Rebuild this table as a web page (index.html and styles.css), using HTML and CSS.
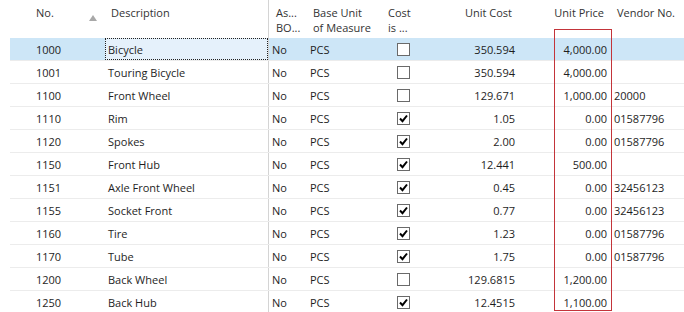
FILE: index.html
```html
<!DOCTYPE html>
<html>
<head>
<meta charset="utf-8">
<link rel="stylesheet" href="styles.css">
</head>
<body>
<div class="grid">
  <div class="row head">
    <div class="c c0 hd">No.<span class="sort"></span></div>
    <div class="c c1 hd">Description</div>
    <div class="c c2 hd">As...<br>BO...</div>
    <div class="c c3 hd">Base Unit<br>of Measure</div>
    <div class="c c4 hd">Cost<br>is ...</div>
    <div class="c c5 hd num">Unit Cost</div>
    <div class="c c6 hd num">Unit Price</div>
    <div class="c c7 hd">Vendor No.</div>
  </div>
  <div class="row sel">
    <div class="c c0">1000</div><div class="c c1 focus">Bicycle</div><div class="c c2">No</div><div class="c c3">PCS</div>
    <div class="c c4"><span class="cb"></span></div><div class="c c5 num">350.594</div><div class="c c6 num">4,000.00</div><div class="c c7"></div>
  </div>
  <div class="row">
    <div class="c c0">1001</div><div class="c c1">Touring Bicycle</div><div class="c c2">No</div><div class="c c3">PCS</div>
    <div class="c c4"><span class="cb"></span></div><div class="c c5 num">350.594</div><div class="c c6 num">4,000.00</div><div class="c c7"></div>
  </div>
  <div class="row">
    <div class="c c0">1100</div><div class="c c1">Front Wheel</div><div class="c c2">No</div><div class="c c3">PCS</div>
    <div class="c c4"><span class="cb"></span></div><div class="c c5 num">129.671</div><div class="c c6 num">1,000.00</div><div class="c c7">20000</div>
  </div>
  <div class="row">
    <div class="c c0">1110</div><div class="c c1">Rim</div><div class="c c2">No</div><div class="c c3">PCS</div>
    <div class="c c4"><span class="cb"><svg viewBox="0 0 13 13"><path d="M3 6.5 L5.5 9.2 L10 3.5" /></svg></span></div><div class="c c5 num">1.05</div><div class="c c6 num">0.00</div><div class="c c7">01587796</div>
  </div>
  <div class="row">
    <div class="c c0">1120</div><div class="c c1">Spokes</div><div class="c c2">No</div><div class="c c3">PCS</div>
    <div class="c c4"><span class="cb"><svg viewBox="0 0 13 13"><path d="M3 6.5 L5.5 9.2 L10 3.5" /></svg></span></div><div class="c c5 num">2.00</div><div class="c c6 num">0.00</div><div class="c c7">01587796</div>
  </div>
  <div class="row">
    <div class="c c0">1150</div><div class="c c1">Front Hub</div><div class="c c2">No</div><div class="c c3">PCS</div>
    <div class="c c4"><span class="cb"><svg viewBox="0 0 13 13"><path d="M3 6.5 L5.5 9.2 L10 3.5" /></svg></span></div><div class="c c5 num">12.441</div><div class="c c6 num">500.00</div><div class="c c7"></div>
  </div>
  <div class="row">
    <div class="c c0">1151</div><div class="c c1">Axle Front Wheel</div><div class="c c2">No</div><div class="c c3">PCS</div>
    <div class="c c4"><span class="cb"><svg viewBox="0 0 13 13"><path d="M3 6.5 L5.5 9.2 L10 3.5" /></svg></span></div><div class="c c5 num">0.45</div><div class="c c6 num">0.00</div><div class="c c7">32456123</div>
  </div>
  <div class="row">
    <div class="c c0">1155</div><div class="c c1">Socket Front</div><div class="c c2">No</div><div class="c c3">PCS</div>
    <div class="c c4"><span class="cb"><svg viewBox="0 0 13 13"><path d="M3 6.5 L5.5 9.2 L10 3.5" /></svg></span></div><div class="c c5 num">0.77</div><div class="c c6 num">0.00</div><div class="c c7">32456123</div>
  </div>
  <div class="row">
    <div class="c c0">1160</div><div class="c c1">Tire</div><div class="c c2">No</div><div class="c c3">PCS</div>
    <div class="c c4"><span class="cb"><svg viewBox="0 0 13 13"><path d="M3 6.5 L5.5 9.2 L10 3.5" /></svg></span></div><div class="c c5 num">1.23</div><div class="c c6 num">0.00</div><div class="c c7">01587796</div>
  </div>
  <div class="row">
    <div class="c c0">1170</div><div class="c c1">Tube</div><div class="c c2">No</div><div class="c c3">PCS</div>
    <div class="c c4"><span class="cb"><svg viewBox="0 0 13 13"><path d="M3 6.5 L5.5 9.2 L10 3.5" /></svg></span></div><div class="c c5 num">1.75</div><div class="c c6 num">0.00</div><div class="c c7">01587796</div>
  </div>
  <div class="row">
    <div class="c c0">1200</div><div class="c c1">Back Wheel</div><div class="c c2">No</div><div class="c c3">PCS</div>
    <div class="c c4"><span class="cb"></span></div><div class="c c5 num">129.6815</div><div class="c c6 num">1,200.00</div><div class="c c7"></div>
  </div>
  <div class="row">
    <div class="c c0">1250</div><div class="c c1">Back Hub</div><div class="c c2">No</div><div class="c c3">PCS</div>
    <div class="c c4"><span class="cb"><svg viewBox="0 0 13 13"><path d="M3 6.5 L5.5 9.2 L10 3.5" /></svg></span></div><div class="c c5 num">12.4515</div><div class="c c6 num">1,100.00</div><div class="c c7"></div>
  </div>
  <div class="mark"></div>
</div>
</body>
</html>
```

FILE: styles.css
```css
html, body {
  margin: 0;
  padding: 0;
  background: #fff;
  overflow: hidden;
}
body {
  font-family: "Open Sans", "Noto Sans", sans-serif;
  font-size: 11px;
  color: #1e1e1e;
}
.grid {
  position: relative;
  padding-left: 10px;
  width: 674px;
}
.row {
  display: grid;
  grid-template-columns: 95px 163px 38px 78px 36px 98px 92px 1fr;
  height: 23px;
  box-sizing: border-box;
  border-bottom: 1px solid #ececec;
}
.row.head {
  height: 38px;
  border-bottom: none;
}
.c {
  box-sizing: border-box;
  display: flex;
  align-items: center;
  white-space: nowrap;
  overflow: hidden;
  padding-left: 3px;
}
.c0 { padding-left: 26px; }
.c2 { border-left: 1px solid #d4d4d4; padding-left: 3px; }
.c3 { padding-left: 4px; }
.c4 { padding-left: 13px; }
.c7 { padding-left: 4px; }
.num { justify-content: flex-end; padding-left: 0; padding-right: 3px; }

.hd {
  align-items: flex-start;
  line-height: 15px;
  padding-top: 5px;
  color: #333;
  position: relative;
}
.hd.c0 { padding-left: 26px; }
.hd.c1 { padding-left: 6px; }
.hd.c2 { padding-left: 7px; }
.hd.c3 { padding-left: 7px; }
.hd.c4 { padding-left: 4px; }
.hd.num { padding-right: 6px; }
.hd.c7 { padding-left: 7px; }
.hd.c2, .hd.c3, .hd.c4 { display: block; }

.sort {
  position: absolute;
  left: 79px;
  top: 15px;
  width: 0;
  height: 0;
  border-left: 4px solid transparent;
  border-right: 4px solid transparent;
  border-bottom: 6px solid #a8a8a8;
}

.sel { background: #cde6f7; }
.focus {
  background: #e5f1fb;
  border: 1px dotted #222;
  padding-left: 2px;
}

.cb {
  display: block;
  width: 13px;
  height: 13px;
  box-sizing: border-box;
  border: 1px solid #6a6a6a;
  background: #fff;
  position: relative;
}
.cb svg {
  position: absolute;
  left: -1px;
  top: -1px;
  width: 13px;
  height: 13px;
}
.cb path {
  fill: none;
  stroke: #000;
  stroke-width: 2;
}

.mark {
  position: absolute;
  left: 554px;
  top: 29px;
  width: 58px;
  height: 282px;
  box-sizing: border-box;
  border: 1px solid #c3343a;
}
```
